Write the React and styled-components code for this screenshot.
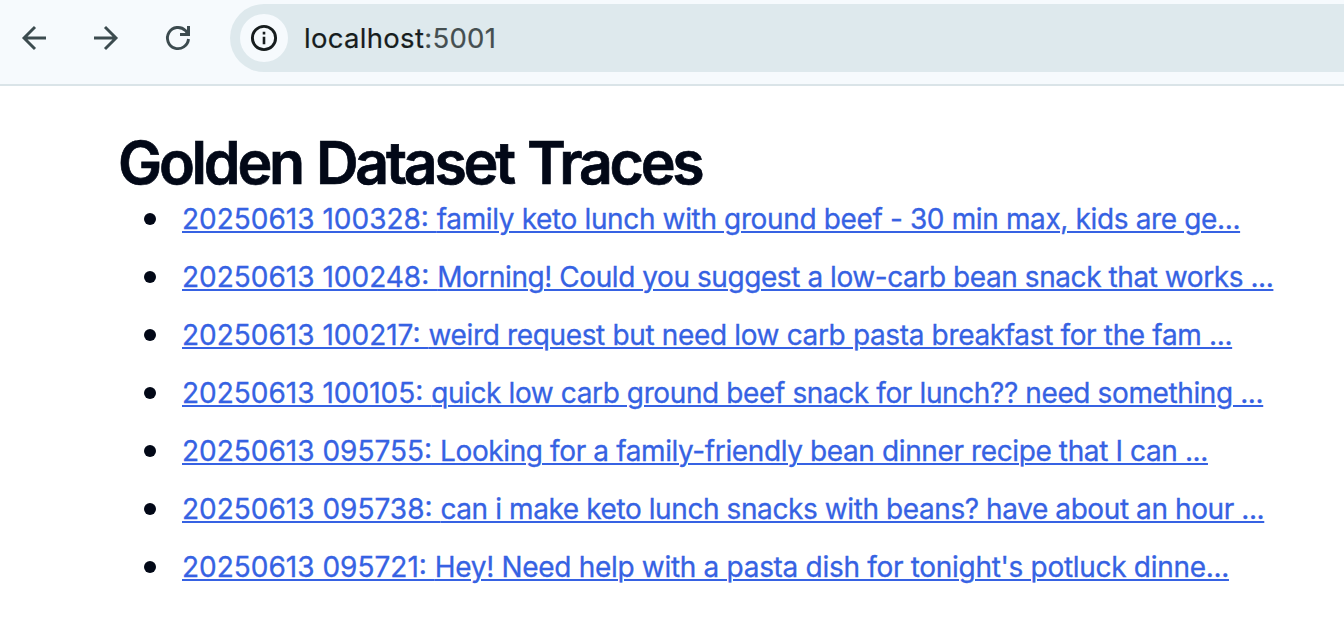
import React from "react";
import styled, { createGlobalStyle } from "styled-components";

const Global = createGlobalStyle`
  *{box-sizing:border-box}
  body{margin:0;background:#fff;overflow:hidden;font-family:Inter,sans-serif;}
`;
const Toolbar = styled.header`
  height:86px;background:#f6fafd;border-bottom:2px solid #dae4e8;
  display:flex;align-items:flex-start;padding:4px 0 0 18px;
`;
const Nav = styled.nav`display:flex;gap:40px;height:68px;align-items:center;width:212px;flex:none;`;
const NavButton = styled.button`
  border:0;background:none;padding:0;width:32px;height:32px;color:#3c4b4f;
  svg{display:block}
`;
const AddressBar = styled.div`
  flex:1;height:68px;background:#dee9ed;border-radius:34px 0 0 34px;
  display:flex;align-items:center;padding-left:10px;
`;
const InfoBadge = styled.span`
  width:48px;height:48px;border-radius:50%;background:#f6fafd;color:#171d1e;
  display:flex;align-items:center;justify-content:center;
`;
const Url = styled.span`
  margin-left:16px;font-size:27.500px;line-height:34px;color:#171d1e;letter-spacing:.3px;white-space:nowrap;
  -webkit-text-stroke:.2px currentColor;
`;
const Port = styled.span`color:#454f51;`;
const Page = styled.main`padding:47px 0 0 118px;`;
const Title = styled.h1`
  margin:0;font-size:59px;line-height:59px;font-weight:600;letter-spacing:-3.25px;word-spacing:2.500px;color:#020817;white-space:nowrap;
  -webkit-text-stroke:.7px currentColor;
`;
const List = styled.ul`margin:0;padding:0;list-style:none;`;
const Item = styled.li`
  height:58px;display:flex;align-items:flex-start;padding-left:26px;
  &::before{content:"";width:12px;height:12px;border-radius:50%;background:#020817;margin:21px 26px 0 0;flex:none}
`;
const TraceLink = styled.a`
  font-size:28px;line-height:54px;color:#3662e3;white-space:nowrap;
  -webkit-text-stroke:.3px currentColor;
  text-decoration:underline;text-decoration-thickness:2px;text-underline-offset:2px;
`;
const Message = styled.span`letter-spacing:${p => p.$spacing}px;`;

const traces = [
  ["20250613 100328: ", "family keto lunch with ground beef - 30 min max, kids are ge...", -0.365],
  ["20250613 100248: ", "Morning! Could you suggest a low-carb bean snack that works ...", -0.43],
  ["20250613 100217: ", "weird request but need low carb pasta breakfast for the fam ...", -0.35],
  ["20250613 100105: ", "quick low carb ground beef snack for lunch?? need something ...", -0.39],
  ["20250613 095755: ", "Looking for a family-friendly bean dinner recipe that I can ...", -0.385],
  ["20250613 095738: ", "can i make keto lunch snacks with beans? have about an hour ...", -0.41],
  ["20250613 095721: ", "Hey! Need help with a pasta dish for tonight's potluck dinne...", -0.305],
];

const Icon = ({ children }) => (
  <svg width="32" height="32" viewBox="0 0 32 32" fill="none" stroke="currentColor" strokeWidth="2.9">{children}</svg>
);

export default function App() {
  return (
    <>
      <Global />
      <Toolbar>
        <Nav>
          <NavButton aria-label="Back"><Icon><path d="M28 16H6M17 5 6 16l11 11" /></Icon></NavButton>
          <NavButton aria-label="Forward"><Icon><path d="M4 16h22M15 5l11 11-11 11" /></Icon></NavButton>
          <NavButton aria-label="Reload"><Icon><path d="M26.500 17a10.550 10.550 0 1 1-3.100-8.500L26 11" /><path d="M28 4v10H18v-3h5l2-2.200V4Z" fill="currentColor" stroke="none" /></Icon></NavButton>
        </Nav>
        <AddressBar>
          <InfoBadge><Icon><circle cx="16" cy="16" r="11.600" /><path d="M16 14.700v7.500M16 9.800v2.600" strokeWidth="2.600" /></Icon></InfoBadge>
          <Url>localhost<Port>:5001</Port></Url>
        </AddressBar>
      </Toolbar>
      <Page>
        <Title>Golden Dataset Traces</Title>
        <List>
          {traces.map(([stamp, text, spacing]) => (
            <Item key={stamp}><TraceLink href="#">{stamp}<Message $spacing={spacing}>{text}</Message></TraceLink></Item>
          ))}
        </List>
      </Page>
    </>
  );
}
